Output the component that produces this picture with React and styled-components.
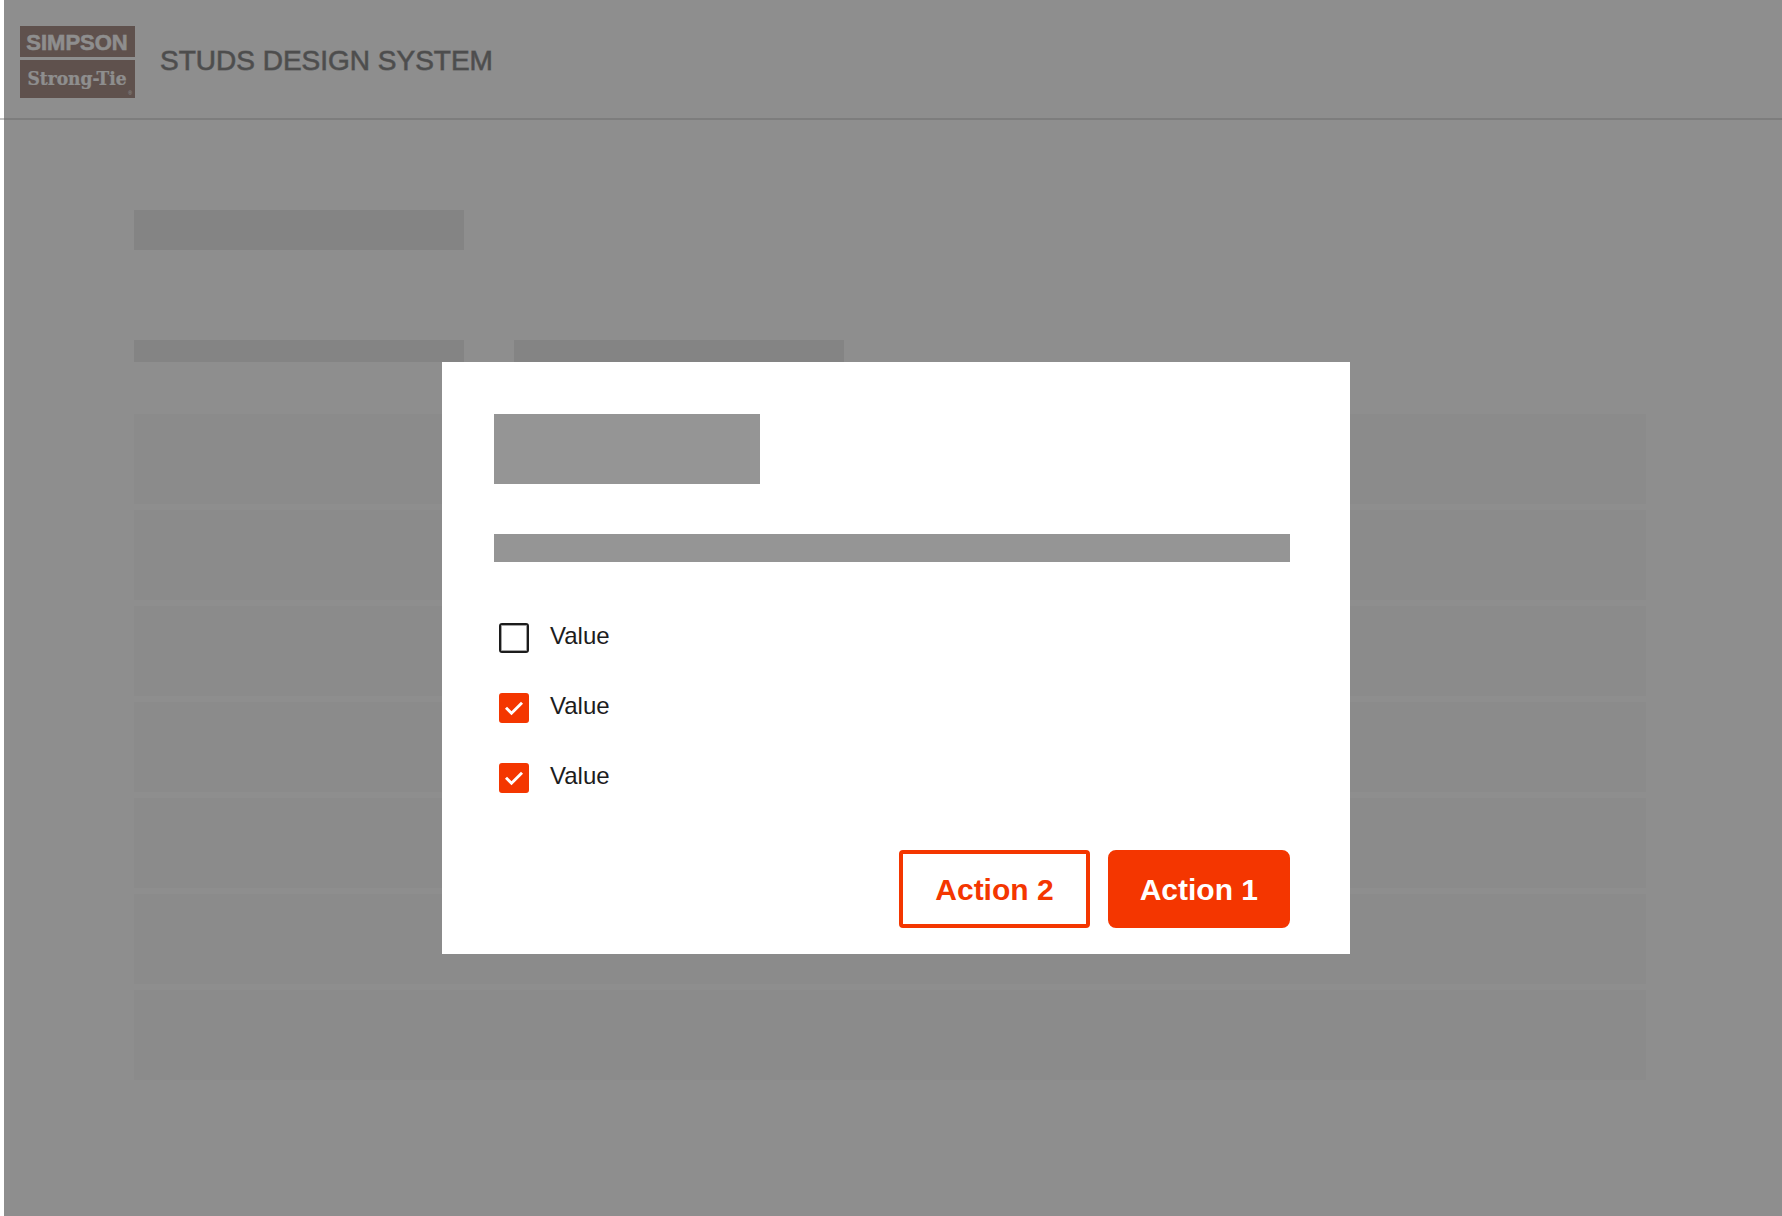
import React from 'react';
import styled, { createGlobalStyle } from 'styled-components';

const accent = '#f43600';
const ink = '#1c1c1c';

const GlobalStyle = createGlobalStyle`
  *, *::before, *::after { box-sizing: border-box; }
  body {
    margin: 0;
    background: #ffffff;
    color: ${ink};
    font-family: "Liberation Sans", Arial, sans-serif;
  }
`;

const Page = styled.div`
  min-height: 100vh;
`;

const Header = styled.header`
  display: flex;
  align-items: flex-start;
  gap: 25px;
  padding: 26px 20px 20px;
  border-bottom: 2px solid #c4c4c4;
`;

const Logo = styled.svg`
  display: block;
  flex: none;
  width: 115px;
  height: 72px;
`;

const SystemName = styled.h1`
  margin: 0;
  font-size: 28px;
  font-weight: 500;
  line-height: 70px;
  -webkit-text-stroke: 1px rgba(28, 28, 28, 0.7);
`;

const Content = styled.main`
  display: flex;
  flex-direction: column;
  padding: 90px 136px 0 134px;
`;

const Placeholder = styled.div`
  width: 330px;
  height: ${({ $small }) => ($small ? 22 : 40)}px;
  background: #dcdcdc;
`;

const Filters = styled.div`
  display: flex;
  gap: 50px;
  margin: 90px 0 52px;
`;

const Rows = styled.div`
  display: flex;
  flex-direction: column;
  gap: 6px;
`;

const Row = styled.div`
  height: 90px;
  background: #f3f3f3;
`;

const Backdrop = styled.div`
  position: fixed;
  inset: 0 0 0 4px;
  display: flex;
  align-items: center;
  justify-content: center;
  padding: 100px 0 0 6px;
  background: rgba(97, 97, 97, 0.715);
`;

const Dialog = styled.form`
  display: flex;
  flex-direction: column;
  width: 100%;
  max-width: 908px;
  padding: 52px 60px 26px 52px;
  background: #ffffff;
`;

const DialogTitle = styled.div`
  width: 266px;
  height: 70px;
  background: #959595;
`;

const DialogText = styled.div`
  height: 28px;
  margin-top: 50px;
  background: #959595;
`;

const Options = styled.div`
  display: flex;
  flex-direction: column;
  align-items: flex-start;
  gap: 40px;
  margin: 61px 0 57px;
  padding-left: 5px;
`;

const OptionLabel = styled.label`
  display: flex;
  align-items: flex-start;
  gap: 21px;
  font-size: 24px;
  line-height: 26px;
  cursor: pointer;
`;

const BoxFrame = styled.span`
  display: grid;
  width: 30px;
  height: 30px;

  > * { grid-area: 1 / 1; }
`;

const Tick = styled.svg`
  width: 30px;
  height: 30px;
  visibility: hidden;
  pointer-events: none;
`;

const Box = styled.input`
  appearance: none;
  width: 30px;
  height: 30px;
  margin: 0;
  border: 2px solid ${ink};
  border-radius: 3px;
  background: #ffffff;
  box-shadow: inset 0 0 0 1px rgba(28, 28, 28, 0.4);
  cursor: pointer;

  &:checked {
    border-color: ${accent};
    background: ${accent};
    box-shadow: none;
  }

  &:checked + ${Tick} { visibility: visible; }
`;

const Actions = styled.div`
  display: flex;
  justify-content: flex-end;
  gap: 18px;
`;

const Button = styled.button`
  height: 78px;
  padding: 2px ${({ $primary }) => ($primary ? 28 : 32)}px 0;
  border: 4px solid ${accent};
  border-radius: ${({ $primary }) => ($primary ? 8 : 4)}px;
  background: ${({ $primary }) => ($primary ? accent : '#ffffff')};
  color: ${({ $primary }) => ($primary ? '#ffffff' : accent)};
  font: bold 30px/36px "Liberation Sans", Arial, sans-serif;
  cursor: pointer;
`;

function BrandLogo() {
  return (
    <Logo viewBox="0 0 115 72" role="img" aria-label="Simpson Strong-Tie">
      <rect width="115" height="31" fill="#5b2a1c" />
      <rect y="34" width="115" height="38" fill="#5b2a1c" />
      <g fill="#ffffff" stroke="#ffffff" fontWeight="bold" textAnchor="middle">
        <text x="57" y="24" fontFamily="Liberation Sans, Arial, sans-serif" fontSize="22" strokeWidth="0.5">SIMPSON</text>
        <text x="57" y="59" fontFamily="DejaVu Serif Condensed, DejaVu Serif, serif" fontSize="19" strokeWidth="0.2">Strong-Tie</text>
        <text x="110" y="69" fontFamily="Liberation Sans, Arial, sans-serif" fontSize="5" fontWeight="normal" stroke="none">®</text>
      </g>
    </Logo>
  );
}

function Option({ id, defaultChecked }) {
  return (
    <OptionLabel htmlFor={id}>
      <BoxFrame>
        <Box id={id} type="checkbox" defaultChecked={defaultChecked} />
        <Tick viewBox="0 0 30 30" aria-hidden="true">
          <path d="M7 14.7L12.5 20.2L23 9.7" fill="none" stroke="#ffffff" strokeWidth="2.9" />
        </Tick>
      </BoxFrame>
      Value
    </OptionLabel>
  );
}

export default function App() {
  return (
    <>
      <GlobalStyle />
      <Page>
        <Header>
          <BrandLogo />
          <SystemName>STUDS DESIGN SYSTEM</SystemName>
        </Header>
        <Content>
          <Placeholder />
          <Filters>
            <Placeholder $small />
            <Placeholder $small />
          </Filters>
          <Rows>
            {Array.from({ length: 7 }, (_, i) => (
              <Row key={i} />
            ))}
          </Rows>
        </Content>
      </Page>
      <Backdrop>
        <Dialog role="dialog" aria-modal="true" aria-label="Values" onSubmit={(e) => e.preventDefault()}>
          <DialogTitle />
          <DialogText />
          <Options>
            <Option id="value-1" />
            <Option id="value-2" defaultChecked />
            <Option id="value-3" defaultChecked />
          </Options>
          <Actions>
            <Button type="button">Action 2</Button>
            <Button type="submit" $primary>Action 1</Button>
          </Actions>
        </Dialog>
      </Backdrop>
    </>
  );
}
